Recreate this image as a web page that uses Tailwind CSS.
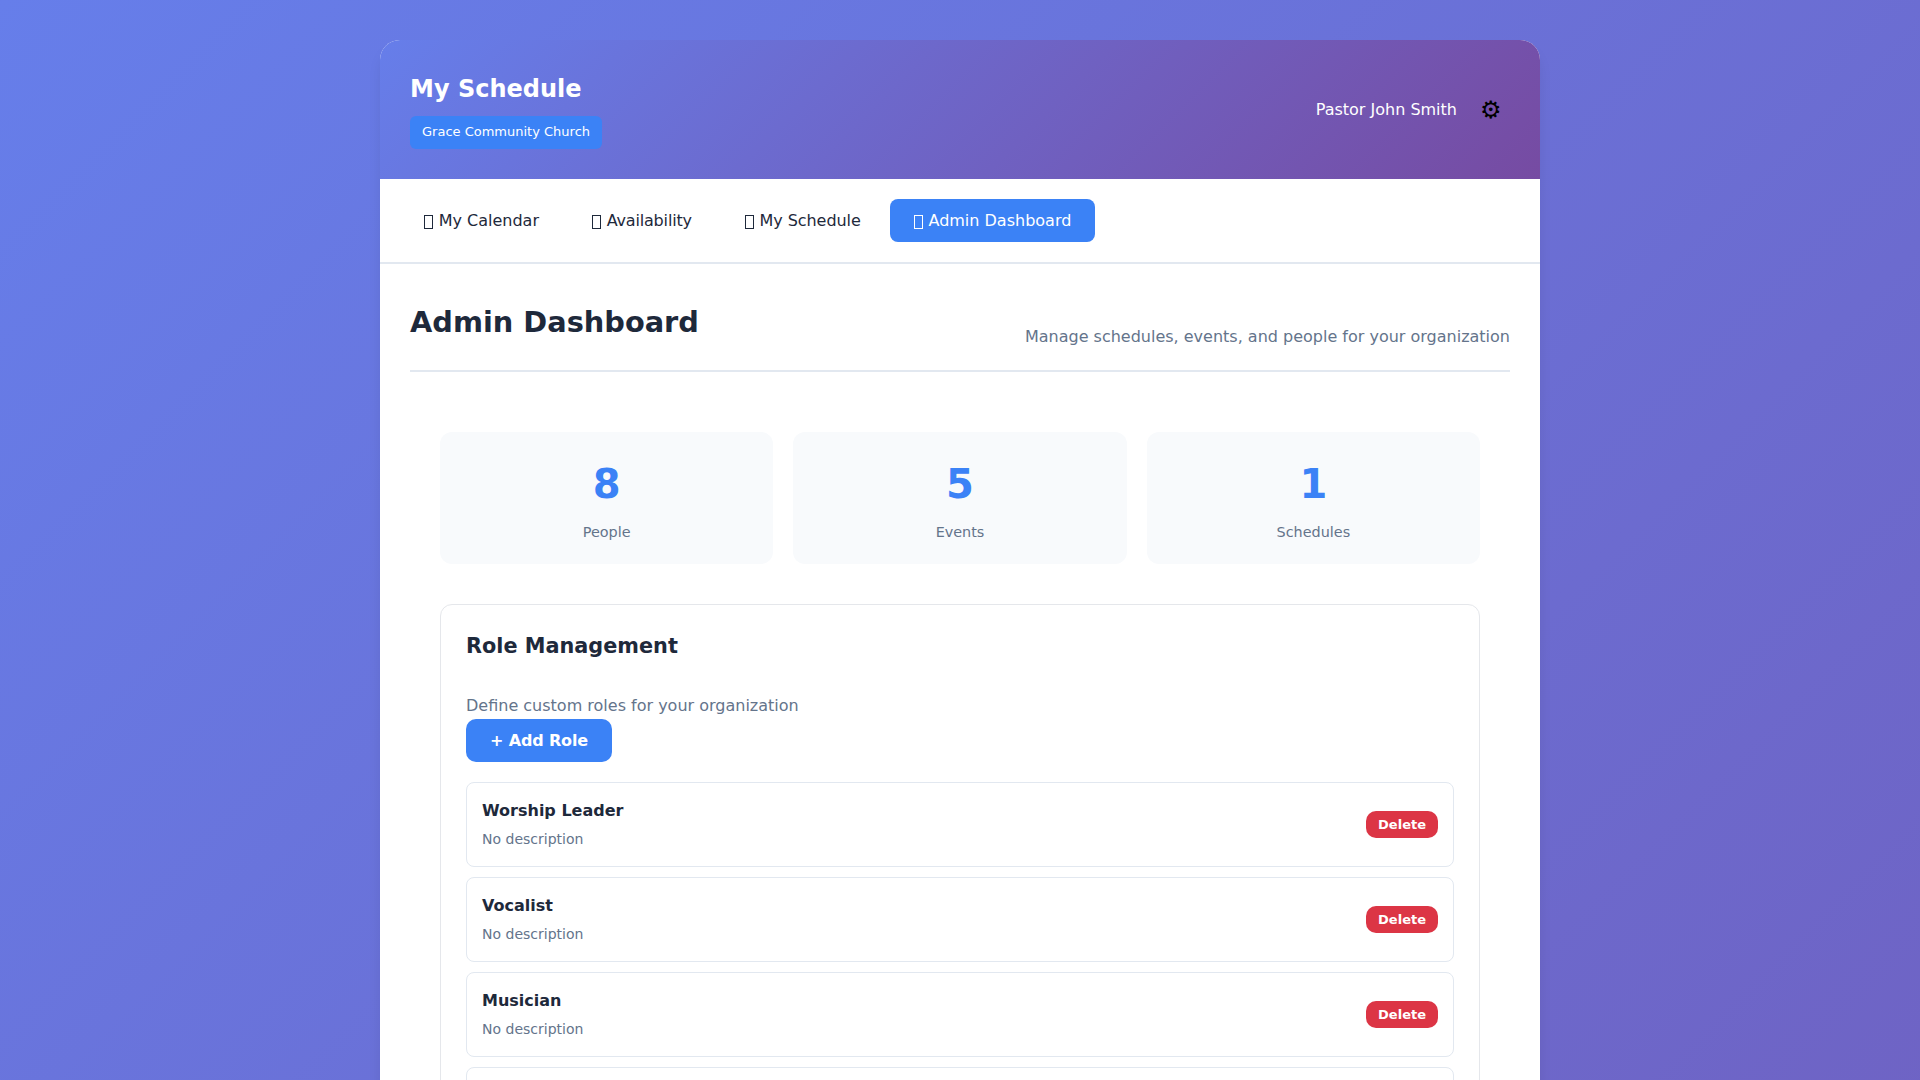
<!DOCTYPE html>
<html lang="en">
<head>
<meta charset="utf-8">
<title>My Schedule</title>
<script src="https://cdn.jsdelivr.net/npm/@tailwindcss/browser@4"></script>
</head>
<body class="h-screen overflow-hidden font-['DejaVu_Sans',sans-serif] text-base leading-[1.6] text-[#1e293b]">
<div class="h-screen overflow-hidden bg-[linear-gradient(135deg,#667eea_0%,#764ba2_100%)] bg-[length:100%_3850px] pt-10">
  <div class="mx-auto h-[1200px] w-[1160px] overflow-hidden rounded-[20px] bg-white shadow-[0_10px_15px_-3px_rgba(0,0,0,0.1)]">
    <header class="flex items-center justify-between bg-[linear-gradient(135deg,#667eea_0%,#764ba2_100%)] p-[30px] text-white">
      <div class="flex flex-col items-start gap-2">
        <h1 class="text-2xl leading-[1.6] font-bold">My Schedule</h1>
        <span class="rounded-md bg-[#3b82f6] px-3 py-1.5 text-[13px] leading-[1.6]">Grace Community Church</span>
      </div>
      <div class="mr-[0.5px] flex items-center gap-[15px]">
        <span>Pastor John Smith</span>
        <button class="p-2 text-2xl leading-[normal] text-black">⚙</button>
      </div>
    </header>
    <nav class="flex gap-[5px] border-b-2 border-[#e2e8f0] p-5 text-base leading-[normal]">
      <button class="flex rounded-lg px-6 py-3 whitespace-pre"><span class="mt-1 mr-[0.2px] ml-[0.4px] h-3.5 w-[9px] border border-current"></span> My Calendar</button>
      <button class="flex rounded-lg px-6 py-3 tracking-[-0.17px] whitespace-pre"><span class="mt-1 mr-[0.4px] ml-[0.4px] h-3.5 w-[9px] border border-current"></span> Availability</button>
      <button class="flex rounded-lg px-6 py-3 tracking-[-0.05px] whitespace-pre"><span class="mt-1 mr-[0.2px] ml-[0.4px] h-3.5 w-[9px] border border-current"></span> My Schedule</button>
      <button class="flex rounded-lg bg-[#3b82f6] px-6 py-3 whitespace-pre text-white"><span class="mt-1 mr-[0.2px] ml-[0.4px] h-3.5 w-[9px] border border-current"></span> Admin Dashboard</button>
    </nav>
    <main class="p-[30px]">
      <div class="flex items-end justify-between border-b-2 border-[#e2e8f0] pt-[5px] pb-5">
        <h2 class="mb-[5px] text-[28.8px] leading-[1.6] font-bold">Admin Dashboard</h2>
        <p class="mb-px text-[#64748b]">Manage schedules, events, and people for your organization</p>
      </div>
      <div class="px-[30px] pt-[60px]">
        <div class="grid grid-cols-3 gap-5 text-center">
          <div class="rounded-xl bg-[#f8fafc] p-5">
            <div class="text-[40px] leading-[1.6] font-bold text-[#3b82f6]">8</div>
            <div class="mt-[5px] text-[14.4px] leading-[1.6] text-[#64748b]">People</div>
          </div>
          <div class="rounded-xl bg-[#f8fafc] p-5">
            <div class="text-[40px] leading-[1.6] font-bold text-[#3b82f6]">5</div>
            <div class="mt-[5px] text-[14.4px] leading-[1.6] text-[#64748b]">Events</div>
          </div>
          <div class="rounded-xl bg-[#f8fafc] p-5">
            <div class="text-[40px] leading-[1.6] font-bold text-[#3b82f6]">1</div>
            <div class="mt-[5px] text-[14.4px] leading-[1.6] text-[#64748b]">Schedules</div>
          </div>
        </div>
        <section class="mt-10 h-[700px] rounded-xl border border-[#e5e7eb] p-[25px]">
          <h3 class="text-[20.8px] leading-[1.6] font-bold">Role Management</h3>
          <p class="mt-[29px] mb-px text-[#64748b]">Define custom roles for your organization</p>
          <button class="block rounded-[10px] bg-[#3b82f6] px-6 py-3 leading-[normal] font-semibold tracking-[-0.15px] text-white">+ Add Role</button>
          <div class="mt-5 flex flex-col gap-2.5">
            <div class="flex items-center justify-between rounded-lg border border-[#e2e8f0] p-[15px]">
              <div><div class="font-semibold">Worship Leader</div><div class="mt-1 mb-px text-sm leading-[1.6] text-[#64748b]">No description</div></div>
              <button class="rounded-[10px] bg-[#dc3545] px-3 py-1.5 text-[13px] leading-[normal] font-semibold text-white">Delete</button>
            </div>
            <div class="flex items-center justify-between rounded-lg border border-[#e2e8f0] p-[15px]">
              <div><div class="font-semibold">Vocalist</div><div class="mt-1 mb-px text-sm leading-[1.6] text-[#64748b]">No description</div></div>
              <button class="rounded-[10px] bg-[#dc3545] px-3 py-1.5 text-[13px] leading-[normal] font-semibold text-white">Delete</button>
            </div>
            <div class="flex items-center justify-between rounded-lg border border-[#e2e8f0] p-[15px]">
              <div><div class="font-semibold">Musician</div><div class="mt-1 mb-px text-sm leading-[1.6] text-[#64748b]">No description</div></div>
              <button class="rounded-[10px] bg-[#dc3545] px-3 py-1.5 text-[13px] leading-[normal] font-semibold text-white">Delete</button>
            </div>
            <div class="h-[85px] rounded-lg border border-[#e2e8f0]"></div>
          </div>
        </section>
      </div>
    </main>
  </div>
</div>
</body>
</html>
